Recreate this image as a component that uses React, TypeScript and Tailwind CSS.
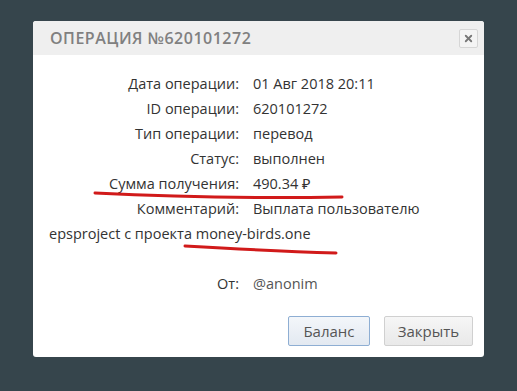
import React from 'react';
import { X } from 'lucide-react';

const rows = [
  { label: 'Дата операции:', value: '01 Авг 2018 20:11' },
  { label: 'ID операции:', value: '620101272' },
  { label: 'Тип операции:', value: 'перевод' },
  { label: 'Статус:', value: 'выполнен' },
  { label: 'Сумма получения:', value: '490.34 ₽' },
];

export default function App() {
  return (
    <div
      className="relative w-[517px] h-[391px] overflow-hidden bg-[#36454c] pl-[33px] pt-[21px]"
      style={{ fontFamily: '"Open Sans", "Noto Sans", sans-serif' }}
    >
      <div className="relative w-[451px] rounded-[3px] bg-white overflow-hidden">
        {/* Header */}
        <div className="flex items-center justify-between h-[34px] bg-[#efefef] pl-[17px] pr-[6px]">
          <h2 className="text-[16px] font-semibold tracking-[0.5px] text-[#808080] uppercase">
            Операция №620101272
          </h2>
          <button className="flex items-center justify-center w-[19px] h-[19px] rounded-[2px] border border-[#d6d6d6] bg-[#f4f4f4]">
            <X size={11} strokeWidth={4} className="text-[#777]" />
          </button>
        </div>

        {/* Body */}
        <div className="px-[16px] pt-[16px] text-[14.5px] leading-[25px] text-[#333]">
          {rows.map((r) => (
            <div key={r.label}>
              <span className="inline-block w-[190px] text-right">{r.label}</span>
              <span className="ml-[14px]">{r.value}</span>
            </div>
          ))}
          <div>
            <span className="inline-block w-[190px] text-right">Комментарий:</span>
            <span className="ml-[14px]">Выплата пользователю epsproject с проекта money-birds.one</span>
          </div>
          <div className="mt-[25px]">
            <span className="inline-block w-[190px] text-right">От:</span>
            <span className="ml-[14px] text-[#555]">@anonim</span>
          </div>
        </div>

        {/* Footer */}
        <div className="flex justify-end gap-[14px] pr-[11px] pt-[20px] pb-[11px]">
          <button className="h-[30px] w-[82px] rounded-[2px] border border-[#8eaed3] bg-gradient-to-b from-[#f3f6fa] to-[#e3e9f1] text-[15px] text-[#555]">
            Баланс
          </button>
          <button className="h-[30px] w-[89px] rounded-[2px] border border-[#d0d0d0] bg-gradient-to-b from-[#f6f6f6] to-[#e9e9e9] text-[15px] text-[#555]">
            Закрыть
          </button>
        </div>

        {/* hand-drawn red underlines */}
        <svg className="absolute left-0 top-0 pointer-events-none" width="451" height="336">
          <path d="M62 172 Q180 178 309 176" stroke="#d11a1a" strokeWidth="3" fill="none" strokeLinecap="round" />
          <path d="M152 225 Q240 230 303 232" stroke="#d11a1a" strokeWidth="3" fill="none" strokeLinecap="round" />
        </svg>
      </div>
    </div>
  );
}
